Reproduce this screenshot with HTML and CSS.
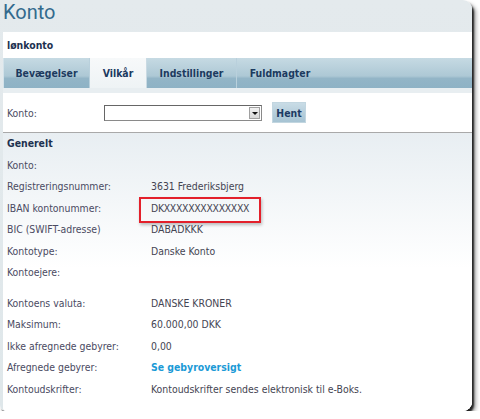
FILE: index.html
```html
<!DOCTYPE html>
<html lang="da">
<head>
<meta charset="utf-8">
<title>Konto</title>
<link rel="stylesheet" href="styles.css">
</head>
<body>
<div class="card">
  <h1 class="title">Konto</h1>
  <div class="panel">
    <div class="acct">lønkonto</div>
    <div class="tabs">
      <div class="tab t1">Bevægelser</div>
      <div class="tab t2 active">Vilkår</div>
      <div class="tab t3">Indstillinger</div>
      <div class="tab t4">Fuldmagter</div>
    </div>
    <div class="strip"></div>
    <div class="form">
      <span class="flabel">Konto:</span>
      <div class="select"><span class="arrow"></span></div>
      <button class="btn">Hent</button>
    </div>
    <div class="content">
      <div class="section">Generelt</div>
      <div class="rows">
        <div class="lbl">Konto:</div><div class="val"></div>
        <div class="lbl">Registreringsnummer:</div><div class="val">3631 Frederiksbjerg</div>
        <div class="lbl">IBAN kontonummer:</div><div class="val"><span class="mark">DKXXXXXXXXXXXXXX</span></div>
        <div class="lbl">BIC (SWIFT-adresse)</div><div class="val">DABADKKK</div>
        <div class="lbl">Kontotype:</div><div class="val">Danske Konto</div>
        <div class="lbl">Kontoejere:</div><div class="val"></div>
        <div class="lbl gap">Kontoens valuta:</div><div class="val gap">DANSKE KRONER</div>
        <div class="lbl">Maksimum:</div><div class="val">60.000,00 DKK</div>
        <div class="lbl">Ikke afregnede gebyrer:</div><div class="val">0,00</div>
        <div class="lbl">Afregnede gebyrer:</div><div class="val"><a class="link" href="#">Se gebyroversigt</a></div>
        <div class="lbl">Kontoudskrifter:</div><div class="val">Kontoudskrifter sendes elektronisk til e-Boks.</div>
      </div>
    </div>
  </div>
</div>
</body>
</html>
```
FILE: styles.css
```css
html, body {
  margin: 0;
  padding: 0;
  background: #ffffff;
}
body {
  font-family: "DejaVu Sans Condensed", "DejaVu Sans", sans-serif;
  font-size: 10.4px;
  color: #4a4a62;
}
.card {
  width: 472px;
  height: 411px;
  background: linear-gradient(#e4eaed, #dfe7ea);
  border-radius: 0 9px 9px 6px;
  box-shadow: 2px 3px 2px rgba(0, 0, 0, 0.8), 4px 4px 4px rgba(0, 0, 0, 0.35);
  display: flex;
  flex-direction: column;
}
.title {
  margin: 0;
  height: 32px;
  padding-left: 3px;
  font-family: Roboto, "Open Sans", sans-serif;
  font-weight: 400;
  font-size: 20px;
  line-height: 24px;
  color: #336a8d;
}
.panel {
  margin-left: 3px;
  flex: 1;
  background: #ffffff;
  display: flex;
  flex-direction: column;
  border-radius: 0 0 9px 4px;
}
.acct {
  height: 26px;
  line-height: 26px;
  padding-left: 4px;
  font-weight: bold;
  color: #1d3150;
}
.tabs {
  height: 30px;
  display: flex;
  background: linear-gradient(#c6dae3 0%, #adc8d5 60%, #93b5c7 68%, #8eb2c5 100%);
  border-left: 1px solid #d3e2ea;
}
.tab {
  line-height: 30px;
  text-align: center;
  font-weight: bold;
  color: #1c3a5f;
  border-right: 1px solid #b9d0dc;
}
.t1 { width: 85px; }
.t2 { width: 56px; }
.t3 { width: 89px; }
.t4 { width: 86px; border-right: none; }
.tab.active {
  background: linear-gradient(#f7f9fa, #eef3f5);
  border-right: 1px solid #c9dae3;
}
.strip {
  height: 5px;
  background: #e8eef1;
}
.form {
  display: flex;
  align-items: center;
  border-bottom: 1px solid #a9a9a9;
  box-sizing: border-box;
  height: 40px;
}
.flabel {
  padding-left: 4px;
  box-sizing: border-box;
  width: 101px;
}
.select {
  width: 158px;
  height: 16px;
  box-sizing: border-box;
  border: 1px solid #8a8a8a;
  border-top-color: #666;
  border-left-color: #666;
  background: #fff;
  position: relative;
  margin-top: 1px;
}
.arrow {
  position: absolute;
  right: 1px;
  top: 1px;
  width: 11px;
  height: 12px;
  box-sizing: border-box;
  background: linear-gradient(#f2f2f2, #d8d8d8);
  border: 1px solid #a0a0a0;
}
.arrow::after {
  content: "";
  position: absolute;
  left: 2px;
  top: 4px;
  border-left: 3px solid transparent;
  border-right: 3px solid transparent;
  border-top: 3px solid #111;
}
.btn {
  margin-left: 10px;
  width: 34px;
  height: 21px;
  padding: 0;
  border: 1px solid #c2d6e0;
  background: linear-gradient(#c9dce6, #a6c3d3);
  font-family: inherit;
  font-size: 10.4px;
  font-weight: bold;
  color: #1c3a64;
}
.content {
  flex: 1;
  background: linear-gradient(#e8eef2 0px, #ffffff 135px);
  padding-left: 4px;
  border-radius: 0 0 9px 4px;
}
.section {
  height: 21.5px;
  line-height: 21.5px;
  font-weight: bold;
  color: #1d3150;
}
.rows {
  display: grid;
  grid-template-columns: 144px 1fr;
  grid-template-rows: repeat(6, 21.5px) 30.5px repeat(4, 21.5px);
  line-height: 21.5px;
}
.rows .gap {
  margin-top: 9px;
}
.val {
  color: #444452;
}
.mark {
  position: relative;
  letter-spacing: -0.3px;
}
.mark::after {
  content: "";
  position: absolute;
  left: -12px;
  top: -5px;
  width: 122px;
  height: 26px;
  box-sizing: border-box;
  border: 2px solid #e3202b;
  box-shadow: 1px 2px 3px rgba(0, 0, 0, 0.25);
}
.link {
  color: #1b9ad6;
  font-weight: bold;
  text-decoration: none;
}
```
